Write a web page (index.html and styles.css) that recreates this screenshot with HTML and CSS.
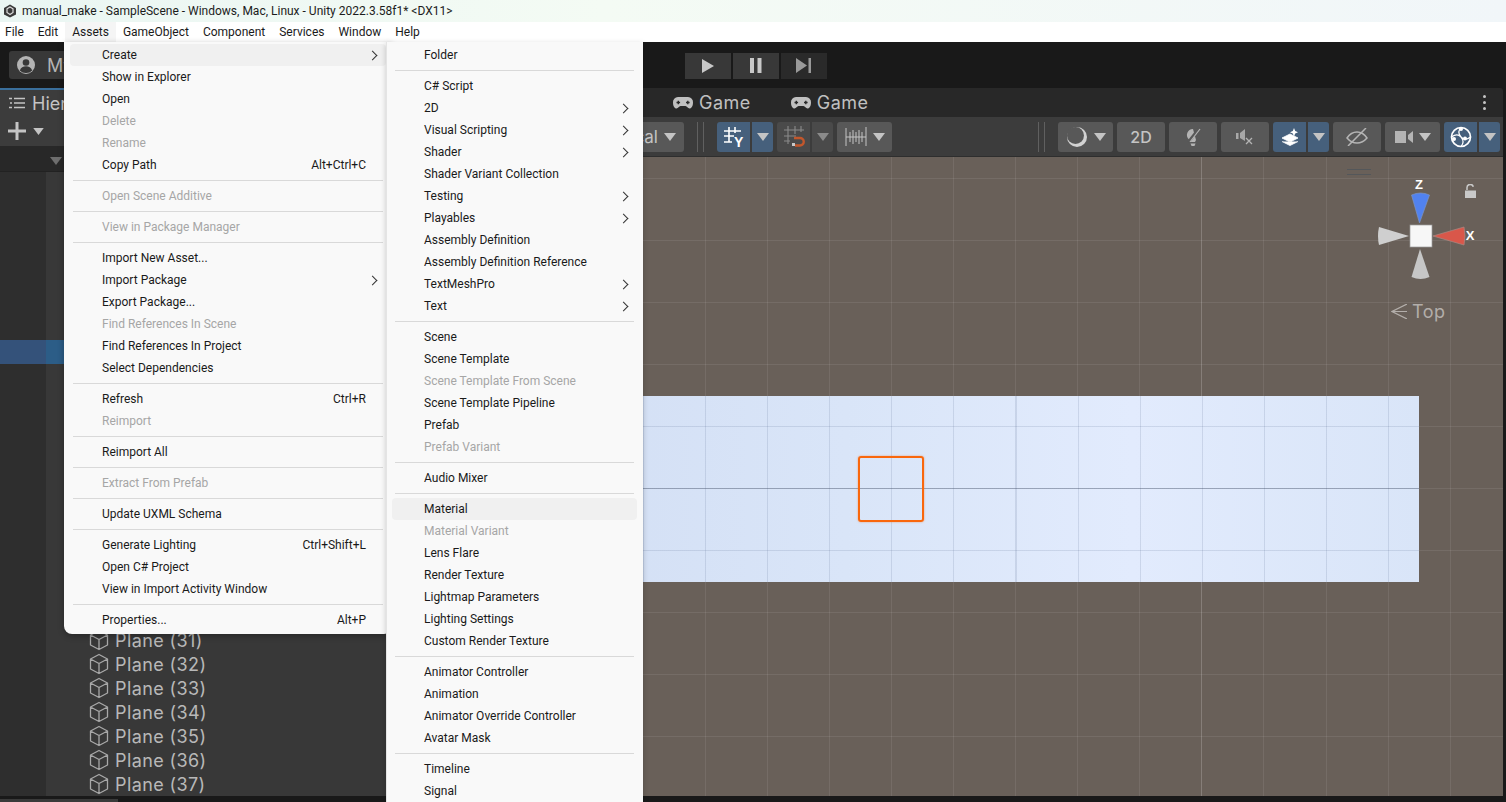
FILE: index.html
```html
<!DOCTYPE html>
<html lang="en">
<head>
    <meta charset="UTF-8">
    <meta name="viewport" content="width=device-width, initial-scale=1.0">
    <title>manual_make - SampleScene - Windows, Mac, Linux - Unity 2022.3.58f1* &lt;DX11&gt;</title>
    <link rel="stylesheet" href="styles.css">
</head>
<body>
    <svg class="defs" width="0" height="0">
        <defs>
            <symbol id="cube" viewBox="0 0 20 22">
                <path d="M10 1.5 18.5 6v10L10 20.5 1.500 16V6zM1.500 6 10 10.500 18.500 6M10 10.500v10" fill="none" stroke="currentColor" stroke-width="1.300" stroke-linejoin="round"/>
            </symbol>
            <symbol id="pad" viewBox="0 0 22 14">
                <path d="M6 1h10a5 5 0 0 1 5 5.500c0 3.500-1.500 6-3.500 6-1.700 0-2.500-2.500-4-2.500H8.500c-1.500 0-2.300 2.500-4 2.500C2.500 12.500 1 10 1 6.500A5 5 0 0 1 6 1z" fill="currentColor"/>
                <path d="M4.500 6.500h3.600M6.300 4.700v3.600M14 6.500h3.600M15.800 4.700v3.600" stroke="#282828" stroke-width="1.400"/>
            </symbol>
            <symbol id="down" viewBox="0 0 12 8">
                <path d="M0 0h12L6 8z" fill="currentColor"/>
            </symbol>
        </defs>
    </svg>

    <header class="titlebar">
        <svg class="unity-logo" width="14" height="14" viewBox="0 0 14 14">
            <path d="M7 .5 13 4v6.500L7 13.500 1 10.500V4z" fill="#3a3a3a"/>
            <path d="M7 3 10 4.800v3.600L7 10.500 4 8.400V4.800z" fill="none" stroke="#ddd" stroke-width="1.200"/>
        </svg>
        <span>manual_make - SampleScene - Windows, Mac, Linux - Unity 2022.3.58f1* &lt;DX11&gt;</span>
    </header>

    <nav class="menubar">
        <span class="menubar-item">File</span>
        <span class="menubar-item">Edit</span>
        <span class="menubar-item active">Assets</span>
        <span class="menubar-item">GameObject</span>
        <span class="menubar-item">Component</span>
        <span class="menubar-item">Services</span>
        <span class="menubar-item">Window</span>
        <span class="menubar-item">Help</span>
    </nav>

    <div class="editor">
        <div class="main-toolbar">
            <div class="account-btn">
                <svg width="20" height="20" viewBox="0 0 20 20">
                    <circle cx="10" cy="10" r="9" fill="#b4b4b4"/>
                    <circle cx="10" cy="7.500" r="3.300" fill="#383838"/>
                    <path d="M3.800 15.500c1-3 3.500-4.200 6.200-4.200s5.200 1.200 6.200 4.200A8.500 8.500 0 0 1 10 18a8.500 8.500 0 0 1-6.200-2.500z" fill="#383838"/>
                </svg>
                <span>My</span>
            </div>
            <div class="play-group">
                <div class="play-btn">
                    <svg width="14" height="16" viewBox="0 0 14 16"><path d="M1 1v14l12-7z" fill="#c8c8c8"/></svg>
                </div>
                <div class="play-btn">
                    <svg width="14" height="15" viewBox="0 0 14 15"><path d="M1 0h4v15H1zM8.500 0h4v15h-4z" fill="#c8c8c8"/></svg>
                </div>
                <div class="play-btn off">
                    <svg width="17" height="15" viewBox="0 0 17 15"><path d="M1 0v15l11-7.500zM13.500 0H16v15h-2.500z" fill="#999"/></svg>
                </div>
            </div>
        </div>

        <div class="dock">
            <section class="hierarchy">
                <div class="hier-tabs">
                    <div class="hier-tab">
                        <svg width="16" height="12" viewBox="0 0 16 12">
                            <path d="M5 1.500h11M5 6h11M5 10.500h11M0 1.500h3M1 6h2M0 10.500h3" stroke="#c4c4c4" stroke-width="1.300"/>
                        </svg>
                        <span>Hierarchy</span>
                    </div>
                </div>
                <div class="hier-tools">
                    <svg width="18" height="18" viewBox="0 0 18 18"><path d="M9 0v18M0 9h18" stroke="#c4c4c4" stroke-width="3"/></svg>
                    <svg class="hier-caret" width="11" height="7"><use href="#down"/></svg>
                </div>
                <div class="hier-sort">
                    <svg class="sort-caret" width="12" height="12"><use href="#down"/></svg>
                </div>
                <ul class="hier-list">
                    <li class="hier-row"></li>
                    <li class="hier-row"></li>
                    <li class="hier-row"></li>
                    <li class="hier-row"></li>
                    <li class="hier-row"></li>
                    <li class="hier-row"></li>
                    <li class="hier-row"></li>
                    <li class="hier-row selected"></li>
                    <li class="hier-row"></li>
                    <li class="hier-row"></li>
                    <li class="hier-row"></li>
                    <li class="hier-row"></li>
                    <li class="hier-row"></li>
                    <li class="hier-row"></li>
                    <li class="hier-row"></li>
                    <li class="hier-row"></li>
                    <li class="hier-row"></li>
                    <li class="hier-row"></li>
                    <li class="hier-row"></li>
                    <li class="hier-row"><svg class="cube" width="20" height="22"><use href="#cube"/></svg>Plane (31)</li>
                    <li class="hier-row"><svg class="cube" width="20" height="22"><use href="#cube"/></svg>Plane (32)</li>
                    <li class="hier-row"><svg class="cube" width="20" height="22"><use href="#cube"/></svg>Plane (33)</li>
                    <li class="hier-row"><svg class="cube" width="20" height="22"><use href="#cube"/></svg>Plane (34)</li>
                    <li class="hier-row"><svg class="cube" width="20" height="22"><use href="#cube"/></svg>Plane (35)</li>
                    <li class="hier-row"><svg class="cube" width="20" height="22"><use href="#cube"/></svg>Plane (36)</li>
                    <li class="hier-row"><svg class="cube" width="20" height="22"><use href="#cube"/></svg>Plane (37)</li>
                </ul>
            </section>

            <section class="scene-panel">
                <div class="scene-tabs">
                    <div class="scene-tab">
                        <svg width="22" height="14"><use href="#pad"/></svg>
                        <span>Game</span>
                    </div>
                    <div class="scene-tab">
                        <svg width="22" height="14"><use href="#pad"/></svg>
                        <span>Game</span>
                    </div>
                    <div class="kebab"><i></i><i></i><i></i></div>
                </div>

                <div class="scene-tools">
                    <div class="tool-group">
                        <div class="tool-btn wide-view">
                            <span>Local</span>
                            <svg width="12" height="8"><use href="#down"/></svg>
                        </div>
                        <div class="grip"></div>
                        <div class="tool-split">
                            <div class="tool-btn blue main">
                                <svg width="22" height="22" viewBox="0 0 22 22">
                                    <path d="M6 1v15M12 1v6M1 5h17M1 10h10M1 16h8" stroke="#fff" stroke-width="1.600" fill="none"/>
                                    <text x="11" y="21" class="icon-letter">Y</text>
                                </svg>
                            </div>
                            <div class="tool-btn blue-dark side">
                                <svg width="12" height="8"><use href="#down"/></svg>
                            </div>
                        </div>
                        <div class="tool-split">
                            <div class="tool-btn dim main">
                                <svg width="22" height="22" viewBox="0 0 22 22">
                                    <path d="M5 0v18M12 0v8M18 0v6M1 4h20M1 10h12M1 15h6" stroke="#8a8a8a" stroke-width="1.100" fill="none"/>
                                    <path d="M11 12h6a3 3 0 0 1 0 7.500h-5" stroke="#c2572c" stroke-width="2.400" fill="none"/>
                                    <path d="M9 17h3v3H9z" fill="#c8c8c8"/>
                                </svg>
                            </div>
                            <div class="tool-btn dim side">
                                <svg width="12" height="8"><use href="#down"/></svg>
                            </div>
                        </div>
                        <div class="tool-btn ruler">
                            <svg width="22" height="20" viewBox="0 0 22 20">
                                <path d="M1 1v18M21 0v19M1 10h20M5 5v10M8 3v14M11 5v10M14 3v14M17 5v10" stroke="#c4c4c4" stroke-width="1" fill="none"/>
                            </svg>
                            <svg width="12" height="8"><use href="#down"/></svg>
                        </div>
                    </div>

                    <div class="tool-group">
                        <div class="grip"></div>
                        <div class="tool-btn shading">
                            <svg width="22" height="22" viewBox="0 0 22 22">
                                <circle cx="11" cy="11" r="10" fill="#d2d2d2"/>
                                <circle cx="9.500" cy="9.500" r="8.500" fill="#585858"/>
                            </svg>
                            <svg width="12" height="8"><use href="#down"/></svg>
                        </div>
                        <div class="tool-btn plain"><span class="two-d">2D</span></div>
                        <div class="tool-btn plain">
                            <svg width="16" height="20" viewBox="0 0 16 20">
                                <path d="M8 2a6 6 0 0 0-4 10.500L5 15h5l1-2z" fill="#b4b4b4"/>
                                <path d="M5.500 16.500h5L9.500 19h-3z" fill="#b4b4b4"/>
                                <path d="M14.500 1 3.500 15" stroke="#585858" stroke-width="3"/>
                                <path d="M15 2 5 15" stroke="#b4b4b4" stroke-width="1.200"/>
                            </svg>
                        </div>
                        <div class="tool-btn plain">
                            <svg width="18" height="16" viewBox="0 0 18 16">
                                <path d="M0 4h2.500v6H0zM4 4l5-4v12L4 9z" fill="#a8a8a8"/>
                                <path d="M10 9l6 6M16 9l-6 6" stroke="#b4b4b4" stroke-width="1.300"/>
                            </svg>
                        </div>
                        <div class="tool-split">
                            <div class="tool-btn blue main">
                                <svg width="18" height="18" viewBox="0 0 18 18">
                                    <path d="M1 10l8-4 8 4-8 4zM1 13.500l8 4 8-4" fill="#fff" stroke="#fff" stroke-width=".8"/>
                                    <path d="M13 0l1.200 3L17 4.200 14.200 5.400 13 8.500 11.800 5.400 9 4.200 11.800 3z" fill="#fff"/>
                                </svg>
                            </div>
                            <div class="tool-btn blue-dark side">
                                <svg width="12" height="8"><use href="#down"/></svg>
                            </div>
                        </div>
                        <div class="tool-btn plain">
                            <svg width="22" height="18" viewBox="0 0 22 18">
                                <path d="M1 10c3-4.500 6-6 10-6s7 1.500 10 6c-3 3.500-6 5-10 5s-7-1.500-10-5z" fill="none" stroke="#b4b4b4" stroke-width="1.500"/>
                                <path d="M20 0 2 18" stroke="#b4b4b4" stroke-width="1.500"/>
                            </svg>
                        </div>
                        <div class="tool-btn shading">
                            <svg width="18" height="12" viewBox="0 0 18 12"><path d="M0 0h11v12H0zM13 4l5-4v12l-5-4z" fill="#b4b4b4"/></svg>
                            <svg width="12" height="8"><use href="#down"/></svg>
                        </div>
                        <div class="tool-split">
                            <div class="tool-btn blue main">
                                <svg width="22" height="22" viewBox="0 0 22 22">
                                    <circle cx="11" cy="11" r="9.500" fill="none" stroke="#fff" stroke-width="1.700"/>
                                    <path d="M1.500 11c4-3 7-3 9.500 0 2.500 3 6 3 9.500 0M11 1.500c-3 3-3 6 0 9.500 3 3.500 3 6 0 9.500" fill="none" stroke="#fff" stroke-width="1.200"/>
                                    <circle cx="11" cy="3" r="2" fill="#fff"/><circle cx="4" cy="13" r="2" fill="#fff"/><circle cx="15" cy="12.500" r="2" fill="#fff"/>
                                </svg>
                            </div>
                            <div class="tool-btn blue-dark side">
                                <svg width="12" height="8"><use href="#down"/></svg>
                            </div>
                        </div>
                    </div>
                </div>

                <div class="scene-view">
                    <div class="ground-plane"></div>
                    <div class="selected-box"></div>
                    <div class="overlay-grab"></div>
                    <svg class="gizmo-lock" width="13" height="14" viewBox="0 0 13 14">
                        <path d="M3 6V3.500a3.200 3.200 0 0 1 6.300-.7" fill="none" stroke="#c9c9c9" stroke-width="1.500"/>
                        <path d="M1 6.500h11V14H1z" fill="#c9c9c9"/>
                    </svg>
                    <svg class="gizmo" width="100" height="100" viewBox="0 0 100 100">
                        <path d="M41.500 36 33.500 8q9-4 18 0z" fill="#5182f0" stroke="#7d93c0" stroke-width=".7"/>
                        <path d="M55 49 86 40q2 9 0 18z" fill="#d9574a" stroke="#a98a84" stroke-width=".7"/>
                        <path d="M31 49 1 40q-2 9 0 18z" fill="#cfcfcf"/>
                        <path d="M42 62 33.500 90q9 4 18 0z" fill="#c6c6c6"/>
                        <rect x="32" y="38" width="22" height="22" fill="#f7f7f7" stroke="#9b9b9b" stroke-width=".7"/>
                        <text x="41" y="2" class="gizmo-letter">Z</text>
                        <text x="92" y="53" class="gizmo-letter">X</text>
                    </svg>
                    <div class="view-label">
                        <svg width="16" height="15" viewBox="0 0 16 15"><path d="M16 0 1 7.500 16 15M16 7.500H1" fill="none" stroke="#b3aeaa" stroke-width="1.200"/></svg>
                        <span>Top</span>
                    </div>
                </div>
            </section>
        </div>

        <div class="status-strip"><div class="status-thumb"></div></div>
    </div>

    <div class="menu assets-menu">
        <div class="menu-row hover sub">Create</div>
        <div class="menu-row">Show in Explorer</div>
        <div class="menu-row">Open</div>
        <div class="menu-row off">Delete</div>
        <div class="menu-row off">Rename</div>
        <div class="menu-row">Copy Path<span class="shortcut">Alt+Ctrl+C</span></div>
        <div class="menu-sep"></div>
        <div class="menu-row off">Open Scene Additive</div>
        <div class="menu-sep"></div>
        <div class="menu-row off">View in Package Manager</div>
        <div class="menu-sep"></div>
        <div class="menu-row">Import New Asset...</div>
        <div class="menu-row sub">Import Package</div>
        <div class="menu-row">Export Package...</div>
        <div class="menu-row off">Find References In Scene</div>
        <div class="menu-row">Find References In Project</div>
        <div class="menu-row">Select Dependencies</div>
        <div class="menu-sep"></div>
        <div class="menu-row">Refresh<span class="shortcut">Ctrl+R</span></div>
        <div class="menu-row off">Reimport</div>
        <div class="menu-sep"></div>
        <div class="menu-row">Reimport All</div>
        <div class="menu-sep"></div>
        <div class="menu-row off">Extract From Prefab</div>
        <div class="menu-sep"></div>
        <div class="menu-row">Update UXML Schema</div>
        <div class="menu-sep"></div>
        <div class="menu-row">Generate Lighting<span class="shortcut">Ctrl+Shift+L</span></div>
        <div class="menu-row">Open C# Project</div>
        <div class="menu-row">View in Import Activity Window</div>
        <div class="menu-sep"></div>
        <div class="menu-row">Properties...<span class="shortcut">Alt+P</span></div>
    </div>

    <div class="menu create-menu">
        <div class="menu-row">Folder</div>
        <div class="menu-sep"></div>
        <div class="menu-row">C# Script</div>
        <div class="menu-row sub">2D</div>
        <div class="menu-row sub">Visual Scripting</div>
        <div class="menu-row sub">Shader</div>
        <div class="menu-row">Shader Variant Collection</div>
        <div class="menu-row sub">Testing</div>
        <div class="menu-row sub">Playables</div>
        <div class="menu-row">Assembly Definition</div>
        <div class="menu-row">Assembly Definition Reference</div>
        <div class="menu-row sub">TextMeshPro</div>
        <div class="menu-row sub">Text</div>
        <div class="menu-sep"></div>
        <div class="menu-row">Scene</div>
        <div class="menu-row">Scene Template</div>
        <div class="menu-row off">Scene Template From Scene</div>
        <div class="menu-row">Scene Template Pipeline</div>
        <div class="menu-row">Prefab</div>
        <div class="menu-row off">Prefab Variant</div>
        <div class="menu-sep"></div>
        <div class="menu-row">Audio Mixer</div>
        <div class="menu-sep"></div>
        <div class="menu-row hover">Material</div>
        <div class="menu-row off">Material Variant</div>
        <div class="menu-row">Lens Flare</div>
        <div class="menu-row">Render Texture</div>
        <div class="menu-row">Lightmap Parameters</div>
        <div class="menu-row">Lighting Settings</div>
        <div class="menu-row">Custom Render Texture</div>
        <div class="menu-sep"></div>
        <div class="menu-row">Animator Controller</div>
        <div class="menu-row">Animation</div>
        <div class="menu-row">Animator Override Controller</div>
        <div class="menu-row">Avatar Mask</div>
        <div class="menu-sep"></div>
        <div class="menu-row">Timeline</div>
        <div class="menu-row">Signal</div>
    </div>
</body>
</html>
```

FILE: styles.css
```css
* {
    box-sizing: border-box;
}

html, body {
    height: 100%;
    margin: 0;
    overflow: hidden;
}

body {
    display: flex;
    flex-direction: column;
    position: relative;
    font-family: "Roboto", "Liberation Sans", sans-serif;
    font-size: 12px;
    color: #1a1a1a;
    background-color: #191919;
}

.defs {
    position: absolute;
}

/* window chrome */

.titlebar {
    height: 22px;
    flex: none;
    display: flex;
    align-items: center;
    gap: 5px;
    padding-left: 3px;
    background: linear-gradient(90deg, #eaf6f3, #f4fbf4 40%, #f1f6f9);
    color: #1c1c1c;
}

.menubar {
    height: 20px;
    flex: none;
    display: flex;
    padding-left: 5px;
    background-color: #fff;
}

.menubar-item {
    padding: 0 7px;
    line-height: 20px;
}

.menubar-item:first-child {
    padding-left: 0;
}

.menubar-item.active {
    background-color: #f5f5f5;
}

/* editor */

.editor {
    flex: 1;
    min-height: 0;
    display: flex;
    flex-direction: column;
    font-family: "Inter", sans-serif;
}

.main-toolbar {
    height: 46px;
    flex: none;
    position: relative;
    display: flex;
    align-items: center;
    justify-content: center;
    padding: 0 9px;
    background-color: #191919;
}

.account-btn {
    position: absolute;
    left: 9px;
    top: 9px;
    width: 90px;
    height: 28px;
    display: flex;
    align-items: center;
    gap: 11px;
    padding-left: 7px;
    border-radius: 3px;
    background-color: #383838;
    color: #b4b4b4;
    font-size: 18px;
}

.play-group {
    display: flex;
    gap: 2px;
    margin-top: 1px;
    margin-left: 5px;
}

.play-btn {
    width: 46px;
    height: 26px;
    display: flex;
    align-items: center;
    justify-content: center;
    background-color: #383838;
}

.play-btn.off {
    background-color: #2a2a2a;
}

.dock {
    flex: 1;
    min-height: 0;
    display: flex;
    padding-right: 3px;
}

/* hierarchy */

.hierarchy {
    width: 390px;
    flex: none;
    display: flex;
    flex-direction: column;
    background-color: #383838;
}

.hier-tabs {
    height: 28px;
    flex: none;
    background-color: #282828;
}

.hier-tab {
    height: 100%;
    width: 130px;
    display: flex;
    align-items: center;
    gap: 7px;
    padding-left: 9px;
    border-top: 2px solid #3a6f9c;
    background-color: #3c3c3c;
    color: #c4c4c4;
    font-size: 18px;
}

.hier-tools {
    height: 30px;
    flex: none;
    display: flex;
    align-items: center;
    gap: 7px;
    padding-left: 8px;
    background-color: #3c3c3c;
    color: #c4c4c4;
}

.hier-sort {
    height: 26px;
    flex: none;
    padding: 9px 0 0 50px;
    border-bottom: 1px solid #222;
    background-color: #282828;
    color: #6e6e6e;
}

.hier-sort svg {
    display: block;
}

.hier-list {
    flex: 1;
    margin: 0;
    padding: 0;
    list-style: none;
    background: linear-gradient(90deg, #2e2e2e 46px, #383838 46px);
}

.hier-row {
    height: 24px;
    display: flex;
    align-items: center;
    gap: 6px;
    padding-left: 89px;
    color: #b8b8b8;
    font-size: 18px;
    letter-spacing: .4px;
}

.hier-row.selected {
    background: linear-gradient(90deg, #34527a 46px, #2c5d87 46px);
}

.cube {
    color: #a8a8a8;
    flex: none;
}

/* scene panel */

.scene-panel {
    flex: 1;
    min-width: 0;
    display: flex;
    flex-direction: column;
}

.scene-tabs {
    height: 29px;
    flex: none;
    display: flex;
    align-items: center;
    gap: 39px;
    padding-left: 282px;
    border-radius: 3px 3px 0 0;
    background-color: #282828;
}

.scene-tab {
    display: flex;
    align-items: center;
    gap: 5px;
    color: #c0c0c0;
    font-size: 18px;
    letter-spacing: .5px;
}

.kebab {
    margin-left: auto;
    margin-right: 17px;
    display: flex;
    flex-direction: column;
    gap: 3px;
}

.kebab i {
    width: 3px;
    height: 3px;
    border-radius: 50%;
    background-color: #c4c4c4;
}

.scene-tools {
    height: 40px;
    flex: none;
    display: flex;
    align-items: center;
    justify-content: space-between;
    padding: 0 3px 0 210px;
    border-bottom: 1px solid #2e2e2e;
    background-color: #3c3c3c;
}

.tool-group {
    display: flex;
    align-items: center;
    gap: 4px;
}

.tool-split {
    display: flex;
    gap: 2px;
}

.tool-btn {
    height: 30px;
    display: flex;
    align-items: center;
    justify-content: center;
    gap: 6px;
    border-radius: 3px;
    background-color: #585858;
    color: #c4c4c4;
}

.tool-btn.main {
    width: 33px;
    border-radius: 3px 0 0 3px;
}

.tool-btn.side {
    width: 21px;
    border-radius: 0 3px 3px 0;
}

.tool-btn.blue {
    background-color: #46607c;
}

.tool-btn.blue-dark {
    background-color: #46607c;
}

.tool-btn.dim {
    background-color: #4a4a4a;
    color: #8a8a8a;
}

.tool-btn.plain {
    width: 48px;
}

.tool-btn.shading {
    width: 55px;
}

.tool-btn.ruler {
    width: 55px;
}

.wide-view {
    width: 84px;
    font-size: 17px;
    justify-content: flex-end;
    padding-right: 8px;
}

.two-d {
    font-size: 16px;
    font-weight: 500;
}

.grip {
    width: 7px;
    height: 30px;
    margin: 0 9px;
    border-left: 1px solid #606060;
    border-right: 1px solid #606060;
}

.icon-letter {
    font-family: "Liberation Sans", sans-serif;
    font-size: 14px;
    font-weight: 700;
    fill: #fff;
}

.scene-view {
    flex: 1;
    min-height: 0;
    position: relative;
    overflow: hidden;
    background-color: #696059;
    background-image:
        linear-gradient(90deg, rgba(255, 255, 255, .12), rgba(255, 255, 255, .12)),
        repeating-linear-gradient(90deg, transparent 0 4px, rgba(255, 255, 255, .08) 4px 5px, transparent 5px 62.1px),
        repeating-linear-gradient(180deg, transparent 0 21px, rgba(255, 255, 255, .08) 21px 22px, transparent 22px 62px);
    background-size: 1px 100%, auto, auto;
    background-position: 811px 0, 0 0, 0 0;
    background-repeat: no-repeat, repeat, repeat;
}

/* free canvas items in the scene */

.ground-plane {
    position: absolute;
    left: 210px;
    top: 239px;
    width: 819px;
    height: 186px;
    background-color: #dce7fa;
    background-image:
        linear-gradient(rgba(50, 60, 80, .32), rgba(50, 60, 80, .32)),
        repeating-linear-gradient(90deg, transparent 0 42.900px, rgba(60, 80, 120, .14) 42.900px 44px, transparent 44px 62.100px),
        repeating-linear-gradient(180deg, transparent 0 30px, rgba(60, 80, 120, .14) 30px 31px, transparent 31px 62px),
        linear-gradient(90deg, #d4e0f5 0, #d9e5f8 30%, #e2ebfd 65%, #d9e5f8 100%);
    background-size: 100% 1px, auto, auto, auto;
    background-position: 0 92px, 0 0, 0 0, 0 0;
    background-repeat: no-repeat, repeat, repeat, no-repeat;
}

.selected-box {
    position: absolute;
    left: 468px;
    top: 299px;
    width: 66px;
    height: 66px;
    border: 2.500px solid #f9670d;
    border-radius: 3px;
    box-shadow: 0 0 2px rgba(249, 103, 13, .6);
}

.overlay-grab {
    position: absolute;
    left: 957px;
    top: 12px;
    width: 24px;
    height: 6px;
    border-top: 1px solid #54575a;
    border-bottom: 1px solid #54575a;
}

.gizmo-lock {
    position: absolute;
    left: 1074px;
    top: 27px;
}

.gizmo {
    position: absolute;
    left: 988px;
    top: 30px;
    overflow: visible;
}

.gizmo-letter {
    font-family: "Liberation Sans", sans-serif;
    font-size: 13px;
    font-weight: 700;
    fill: #fff;
    text-anchor: middle;
}

.view-label {
    position: absolute;
    left: 1001px;
    top: 144px;
    display: flex;
    align-items: center;
    gap: 5px;
    color: #b3aeaa;
    font-size: 18px;
    letter-spacing: .5px;
}

.status-strip {
    height: 6px;
    flex: none;
    padding-top: 3px;
    background-color: #191919;
}

.status-thumb {
    width: 118px;
    height: 3px;
    background-color: #3a3a3a;
}

/* context menus */

.menu {
    position: absolute;
    top: 42px;
    padding: 2px 6px;
    background-color: #f9f9f9;
    font-family: "Roboto", "Liberation Sans", sans-serif;
    color: #1a1a1a;
}

.assets-menu {
    left: 64px;
    width: 328px;
    height: 592px;
    border-radius: 0 0 8px 8px;
    box-shadow: 0 2px 6px rgba(0, 0, 0, .3);
}

.create-menu {
    left: 386px;
    width: 257px;
    border-left: 1px solid #e4e4e4;
    box-shadow: 0 2px 6px rgba(0, 0, 0, .2);
    padding-left: 5px;
}

.menu-row {
    height: 22px;
    position: relative;
    display: flex;
    align-items: center;
    justify-content: space-between;
    padding: 0 20px 0 32px;
    border-radius: 4px;
}

.menu-row.hover {
    background-color: #f0f0f0;
}

.menu-row.off {
    color: #a6a6a6;
}

.menu-row.sub::after {
    content: "";
    position: absolute;
    right: 10px;
    top: 8px;
    width: 6px;
    height: 6px;
    border-top: 1px solid #333;
    border-right: 1px solid #333;
    transform: rotate(45deg);
}

.menu-sep {
    height: 1px;
    margin: 4px 3px;
    background-color: #d9d9d9;
}
```
